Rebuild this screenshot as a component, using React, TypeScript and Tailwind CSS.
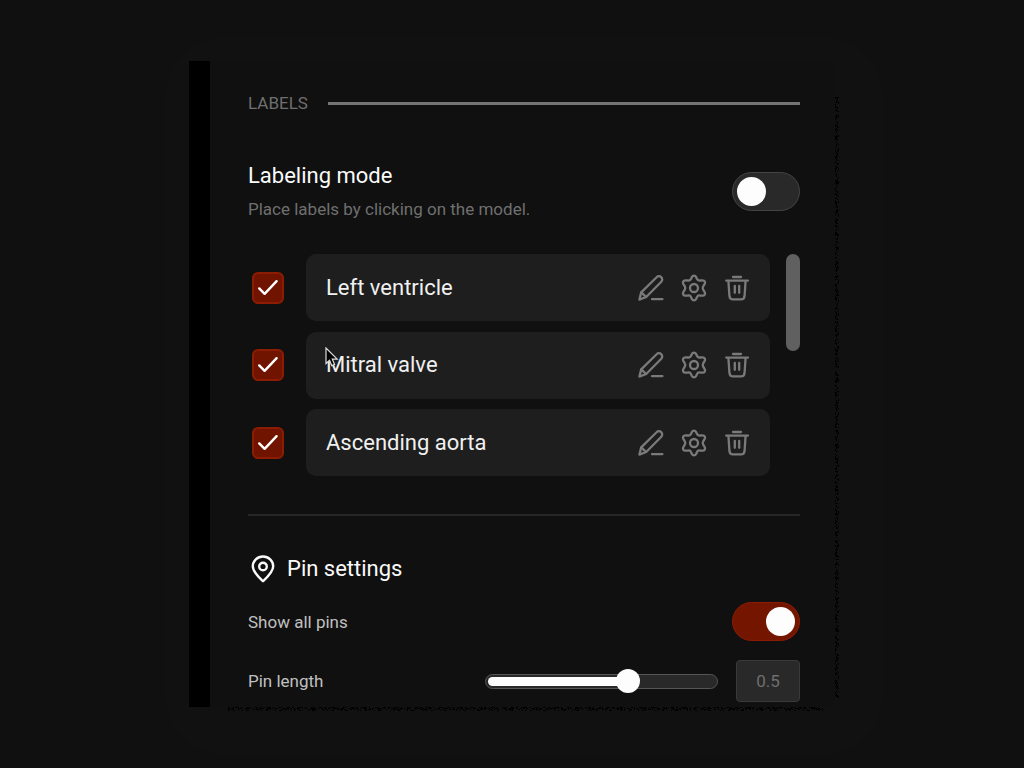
import { useState } from "react";

function PenIcon() {
  return (
    <svg className="size-[30px]" viewBox="0 0 30 30" fill="none" stroke="currentColor" strokeWidth="2.3" strokeLinecap="round" strokeLinejoin="round" aria-hidden="true">
      <path d="M3.400 26.600l1.800-7.200L20.600 4.200a3.200 3.200 0 0 1 4.700 4.500L10.200 24z" />
      <path d="M5.400 19.400l4.600 4.600M16 26.200h10.400" />
    </svg>
  );
}

function GearIcon() {
  return (
    <svg className="size-[30px]" viewBox="0 0 30 30" fill="none" stroke="currentColor" strokeWidth="2.3" strokeLinecap="round" strokeLinejoin="round" aria-hidden="true">
      <path d="M12.900 4c.9-1.900 3.300-1.900 4.200 0l.8 1.800c.5 1.200 1.700 1.900 3 1.700l2.400-.2c2.200-.2 3.500 2 2.300 3.800l-1.300 2.100c-.7 1.100-.7 2.500 0 3.600l1.300 2.100c1.200 1.800-.1 4-2.300 3.800l-2.400-.2c-1.300-.2-2.500.5-3 1.700l-.8 1.800c-.9 1.900-3.300 1.900-4.200 0l-.8-1.800c-.5-1.200-1.700-1.900-3-1.700l-2.400.2c-2.200.2-3.500-2-2.300-3.800l1.300-2.100c.7-1.100.7-2.500 0-3.600l-1.300-2.100C3.200 9.300 4.500 7.100 6.700 7.300l2.400.2c1.300.2 2.500-.5 3-1.700z" />
      <circle cx="15" cy="15" r="4" />
    </svg>
  );
}

function TrashIcon() {
  return (
    <svg className="size-[30px]" viewBox="0 0 30 30" fill="none" stroke="currentColor" strokeWidth="2.3" strokeLinecap="round" strokeLinejoin="round" aria-hidden="true">
      <path d="M11 4h8M4.200 7.600h21.800M6.400 7.600l1 15c.2 2.400 1.400 3.800 3.600 3.800h8c2.200 0 3.400-1.400 3.600-3.800l1-15M12.800 13v6.800M17.200 13v6.800" />
    </svg>
  );
}

function PinIcon() {
  return (
    <svg className="size-[30px]" viewBox="0 0 30 30" fill="none" stroke="currentColor" strokeWidth="2.400" strokeLinecap="round" strokeLinejoin="round" aria-hidden="true">
      <path d="M15 27.200C10.500 23 4.800 18 4.800 12.300a10.200 9.800 0 0 1 20.400 0C25.200 18 19.500 23 15 27.200z" />
      <circle cx="15" cy="12.500" r="3.800" />
    </svg>
  );
}

function Switch({ id, checked, onChange }: { id: string; checked: boolean; onChange: (value: boolean) => void }) {
  return (
    <input
      id={id}
      type="checkbox"
      role="switch"
      checked={checked}
      onChange={(event) => onChange(event.target.checked)}
      className="flex h-[39px] w-[68px] shrink-0 cursor-pointer appearance-none items-center rounded-full border border-[#444] bg-[#292929] px-1 before:size-[29px] before:rounded-full before:bg-[#fdfdfd] checked:justify-end checked:border-[#8e1c02] checked:bg-[#741500]"
    />
  );
}

function LabelRow({ id, name }: { id: string; name: string }) {
  const [visible, setVisible] = useState(true);
  const [text, setText] = useState(name);
  return (
    <li className="flex items-center gap-[22px]">
      <span className="ml-1 grid size-8 shrink-0 place-items-center">
        <input
          id={id}
          type="checkbox"
          aria-label={"Show " + text}
          checked={visible}
          onChange={(event) => setVisible(event.target.checked)}
          className="peer col-start-1 row-start-1 size-8 appearance-none rounded-[6px] border-2 border-[#444] bg-[#292929] checked:border-[#8e1c02] checked:bg-[#701400]"
        />
        <svg className="pointer-events-none col-start-1 row-start-1 hidden size-8 text-white peer-checked:block" viewBox="0 0 32 32" fill="none" stroke="currentColor" strokeWidth="2.400" strokeLinecap="round" strokeLinejoin="round" aria-hidden="true">
          <path d="M7.200 16.400l5.400 5.400L24.600 9.200" />
        </svg>
      </span>
      <div className="flex h-[67px] min-w-0 grow items-center justify-between rounded-[10px] bg-[#1e1e1e] pr-[18px] pl-5">
        <label htmlFor={id} className="truncate text-[22px] leading-7 text-[#f0f0f0]">{text}</label>
        <div className="flex shrink-0 gap-[13px] text-[#7a7a7a]">
          <button
            type="button"
            aria-label="Rename"
            onClick={() => setText(window.prompt("Label name", text) ?? text)}
          >
            <PenIcon />
          </button>
          <button type="button" aria-label="Label settings"><GearIcon /></button>
          <button type="button" aria-label="Delete"><TrashIcon /></button>
        </div>
      </div>
    </li>
  );
}

function Pointer() {
  return (
    <svg className="pointer-events-none absolute top-[93px] left-[77px] h-[22px] w-[14px]" viewBox="0 0 14 22" aria-hidden="true">
      <path d="M1 1v15.500l3.500-3.300 2.300 5.400 2.800-1.200-2.300-5.200h4.900z" fill="#000" stroke="#ddd" strokeWidth="1.200" />
    </svg>
  );
}

const grain = [
  "2 3 1 1 4 2 1 5 2 1 1 4 3 2",
  "1 2 3 4 1 1 2 3 5 2 1 3 1 2 2",
  "3 1 1 5 2 2 1 3 1 6 2 1",
  "1 4 2 7 1 3 3 9 1 2",
];

/* Speckled shadow along the panel's right and bottom edges. */
function GrainEdges() {
  return (
    <>
      <svg className="pointer-events-none absolute top-9 bottom-2 -right-1 h-[calc(100%-44px)] w-1" stroke="#000" shapeRendering="crispEdges" aria-hidden="true">
        {grain.map((dash, i) => (
          <line key={dash} x1={i + 0.5} x2={i + 0.5} y1="0" y2="100%" strokeDasharray={dash} />
        ))}
      </svg>
      <svg className="pointer-events-none absolute right-3 -bottom-1 left-[18px] h-1 w-[calc(100%-30px)]" stroke="#000" shapeRendering="crispEdges" aria-hidden="true">
        {grain.map((dash, i) => (
          <line key={dash} y1={i + 0.5} y2={i + 0.5} x1="0" x2="100%" strokeDasharray={dash} />
        ))}
      </svg>
    </>
  );
}

const labels = [
  { id: "left-ventricle", name: "Left ventricle" },
  { id: "mitral-valve", name: "Mitral valve" },
  { id: "ascending-aorta", name: "Ascending aorta" },
];

export default function App() {
  const [labeling, setLabeling] = useState(false);
  const [showPins, setShowPins] = useState(true);
  const [position, setPosition] = useState(63);
  const [pinLength, setPinLength] = useState("0.5");

  return (
    <div className="flex min-h-screen items-center justify-center bg-[#101010] pt-6 pl-6 font-['Roboto',sans-serif]">
      <div className="w-full max-w-[718px] rounded-[60px] bg-[#111] pt-6 pr-[48px] pb-12 pl-6">
        <main className="relative border-l-[21px] border-black bg-[#101010] pt-[30px] pr-[35px] pb-[5px] pl-[38px]">
          <GrainEdges />
          <div className="flex items-center gap-5">
            <h2 className="text-[17px] leading-6 text-[#6f6f6f]">LABELS</h2>
            <div className="h-[3px] grow bg-[#757575]" />
          </div>

          <div className="mt-[46px] flex items-center justify-between">
            <div>
              <label htmlFor="labeling-mode" className="block text-[22px] leading-[30px] text-[#fafafa]">Labeling mode</label>
              <p className="mt-1.5 text-[17px] leading-6 text-[#6f6f6f]">Place labels by clicking on the model.</p>
            </div>
            <Switch id="labeling-mode" checked={labeling} onChange={setLabeling} />
          </div>

          <div className="relative mt-[33px] flex items-start gap-4">
            <ul className="flex h-[222px] min-w-0 grow flex-col justify-between">
              {labels.map((label) => (
                <LabelRow key={label.id} id={label.id} name={label.name} />
              ))}
            </ul>
            <div className="h-[97px] w-[14px] shrink-0 rounded-full bg-[#5f605f]" />
            <Pointer />
          </div>

          <hr className="mt-[38px] border-t-2 border-[#262626]" />

          <div className="mt-[38px] flex items-center gap-[9px] text-[#fafafa]">
            <PinIcon />
            <h3 className="text-[22px] leading-7">Pin settings</h3>
          </div>

          <div className="mt-[18px] flex items-center justify-between">
            <label htmlFor="show-pins" className="text-[17px] leading-6 text-[#c0c0c0]">Show all pins</label>
            <Switch id="show-pins" checked={showPins} onChange={setShowPins} />
          </div>

          <div className="mt-[19px] flex items-center">
            <label htmlFor="pin-length" className="grow text-[17px] leading-6 text-[#c0c0c0]">Pin length</label>
            <input
              id="pin-length"
              type="range"
              min={0}
              max={100}
              value={position}
              onChange={(event) => {
                const next = Number(event.target.value);
                setPosition(next);
                setPinLength((next / 126).toFixed(1));
              }}
              className="h-[15px] w-[233px] appearance-none rounded-full border border-[#555] bg-[#292929] p-0.5 [&::-webkit-slider-runnable-track]:h-[9px] [&::-webkit-slider-runnable-track]:rounded-full [&::-webkit-slider-runnable-track]:bg-[linear-gradient(to_right,#fdfdfd_var(--fill),transparent_var(--fill))] [&::-webkit-slider-thumb]:-mt-2 [&::-webkit-slider-thumb]:size-6 [&::-webkit-slider-thumb]:appearance-none [&::-webkit-slider-thumb]:rounded-full [&::-webkit-slider-thumb]:bg-[#fdfdfd]"
              style={{ "--fill": `${position}%` } as React.CSSProperties}
            />
            <input
              type="text"
              inputMode="decimal"
              aria-label="Pin length value"
              value={pinLength}
              onChange={(event) => setPinLength(event.target.value)}
              className="ml-[18px] h-[42px] w-16 rounded-[4px] border border-[#3a3a3a] bg-[#292929] text-center text-[17px] text-[#6f6f6f]"
            />
          </div>
        </main>
      </div>
    </div>
  );
}
